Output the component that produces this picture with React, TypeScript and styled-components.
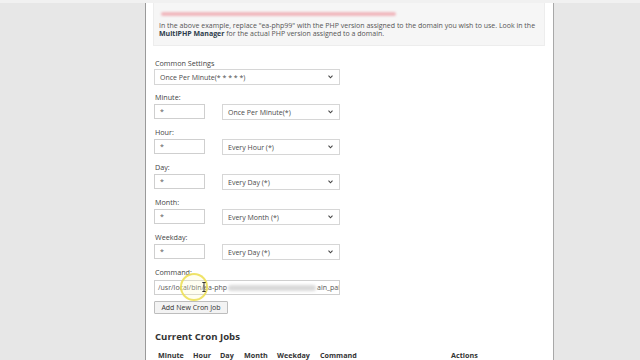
import React from 'react';
import styled, { createGlobalStyle } from 'styled-components';

const Global = createGlobalStyle`
  html, body {
    margin: 0;
    padding: 0;
    background: #e7e7e7;
    font-family: "Open Sans", "DejaVu Sans", sans-serif;
  }
`;

const Page = styled.div`
  display: flex;
  width: 640px;
  height: 360px;
  overflow: hidden;
  border-top: 3px solid #f1f1f1;
  box-sizing: border-box;
  background: #e7e7e7;
`;

const Side = styled.div`
  width: 145px;
  flex: none;
`;

const Panel = styled.div`
  width: 409px;
  flex: none;
  box-sizing: border-box;
  background: #fff;
  border-left: 1px solid #9a9a9a;
  border-right: 1px solid #a8a8a8;
  padding: 0 8px 0 7px;
  overflow: hidden;
`;

const Note = styled.div`
  height: 43px;
  box-sizing: border-box;
  background: #f6f6f6;
  border: 1px solid #ededed;
  border-top: none;
  padding: 6px 6px 0 5px;
  font-size: 7px;
  line-height: 7.6px;
  color: #555;
`;

const Redacted = styled.div`
  height: 10px;
  width: 235px;
  margin-left: 2px;
  margin-bottom: 3px;
  display: flex;
  align-items: center;
  span {
    display: block;
    width: 100%;
    height: 4px;
    border-radius: 2px;
    background: #f0b8be;
    filter: blur(1.2px);
  }
`;

const Strong = styled.b`
  color: #2b3a4a;
  font-weight: 700;
`;

const Form = styled.div`
  margin-top: 12px;
  padding-left: 1px;
`;

const Group = styled.div<{ $gap?: number }>`
  margin-top: ${({ $gap }) => $gap ?? 7}px;
`;

const Label = styled.div`
  height: 10px;
  line-height: 10px;
  font-size: 7.2px;
  color: #444;
  padding-left: 1px;
`;

const Controls = styled.div`
  display: flex;
  align-items: flex-start;
  gap: 17px;
  margin-top: 2px;
`;

const TextBox = styled.div<{ $w: number }>`
  width: ${({ $w }) => $w}px;
  height: 15px;
  box-sizing: border-box;
  border: 1px solid #cfcfcf;
  background: #fff;
  padding-left: 5px;
  font-size: 7px;
  line-height: 14px;
  color: #555;
  white-space: nowrap;
  overflow: hidden;
`;

const SelectBox = styled.div<{ $w: number }>`
  width: ${({ $w }) => $w}px;
  height: 16px;
  box-sizing: border-box;
  border: 1px solid #d6d6d6;
  background: #fff;
  display: flex;
  align-items: center;
  justify-content: space-between;
  padding: 0 6px 0 5px;
  font-size: 7px;
  color: #4a4a4a;
  white-space: nowrap;
`;

const Chevron = () => (
  <svg width="5" height="4" viewBox="0 0 5 4">
    <path d="M0.5 0.7 L2.5 2.8 L4.5 0.7" fill="none" stroke="#444" strokeWidth="1.1" />
  </svg>
);

const Select = ({ w, children }: { w: number; children: React.ReactNode }) => (
  <SelectBox $w={w}>
    <span>{children}</span>
    <Chevron />
  </SelectBox>
);

const CommandWrap = styled.div`
  position: relative;
  margin-top: 3px;
`;

const Blur = styled.span`
  display: inline-block;
  width: 88px;
  height: 6px;
  vertical-align: middle;
  margin: 0 1px;
  border-radius: 3px;
  background: #d9d9d9;
  filter: blur(1.6px);
`;

const Highlight = styled.div`
  position: absolute;
  left: 26px;
  top: -7px;
  width: 28px;
  height: 28px;
  border-radius: 50%;
  box-sizing: border-box;
  border: 2px solid rgba(236, 222, 80, 0.85);
  background: rgba(255, 252, 200, 0.25);
  pointer-events: none;
  svg {
    position: absolute;
    left: 20px;
    top: 7px;
  }
`;

const Button = styled.div`
  margin-top: 6px;
  width: 74px;
  height: 13px;
  box-sizing: border-box;
  border: 1px solid #bdbdbd;
  border-radius: 1px;
  background: #f3f3f3;
  font-size: 7px;
  line-height: 11px;
  text-align: center;
  color: #333;
`;

const Heading = styled.div`
  margin-top: 16px;
  height: 14px;
  line-height: 14px;
  font-size: 9.6px;
  font-weight: 700;
  color: #333;
  padding-left: 1px;
`;

const TableHead = styled.div`
  margin-top: 6px;
  display: grid;
  grid-template-columns: 35px 27px 24px 33px 43px 131px 1fr;
  font-size: 7.2px;
  font-weight: 700;
  color: #333;
  line-height: 10px;
  padding-left: 4px;
`;

const fields = [
  { label: 'Minute:', option: 'Once Per Minute(*)' },
  { label: 'Hour:', option: 'Every Hour (*)' },
  { label: 'Day:', option: 'Every Day (*)' },
  { label: 'Month:', option: 'Every Month (*)' },
  { label: 'Weekday:', option: 'Every Day (*)' },
];

const columns = ['Minute', 'Hour', 'Day', 'Month', 'Weekday', 'Command', 'Actions'];

export default function App() {
  return (
    <>
      <Global />
      <Page>
        <Side />
        <Panel>
          <Note>
            <Redacted>
              <span />
            </Redacted>
            In the above example, replace "ea-php99" with the PHP version assigned to the domain you wish to use. Look in
            the <Strong>MultiPHP Manager</Strong> for the actual PHP version assigned to a domain.
          </Note>
          <Form>
            <Group $gap={0}>
              <Label>Common Settings</Label>
              <div style={{ marginTop: 1 }}>
                <Select w={186}>Once Per Minute(* * * * *)</Select>
              </div>
            </Group>
            {fields.map((f) => (
              <Group key={f.label}>
                <Label>{f.label}</Label>
                <Controls>
                  <TextBox $w={51}>*</TextBox>
                  <Select w={118}>{f.option}</Select>
                </Controls>
              </Group>
            ))}
            <Group>
              <Label>Command:</Label>
              <CommandWrap>
                <TextBox $w={186} style={{ paddingLeft: 3 }}>
                  /usr/local/bin/ea-php<Blur />ain_pai
                </TextBox>
                <Highlight>
                  <svg width="4" height="10" viewBox="0 0 4 10">
                    <path d="M0.3 0.5 H3.7 M2 0.5 V9.5 M0.3 9.5 H3.7" fill="none" stroke="#222" strokeWidth="0.9" />
                  </svg>
                </Highlight>
              </CommandWrap>
            </Group>
            <Button>Add New Cron Job</Button>
            <Heading>Current Cron Jobs</Heading>
            <TableHead>
              {columns.map((c) => (
                <div key={c}>{c}</div>
              ))}
            </TableHead>
          </Form>
        </Panel>
      </Page>
    </>
  );
}
